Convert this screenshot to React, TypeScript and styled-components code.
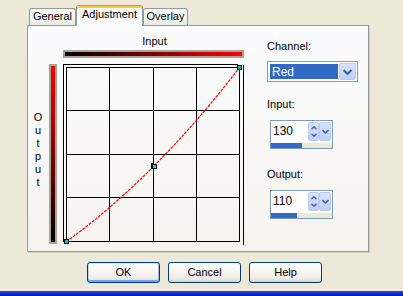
import React from 'react';
import styled, { createGlobalStyle } from 'styled-components';

const GlobalStyle = createGlobalStyle`
  html, body {
    margin: 0;
    padding: 0;
    background: #ece9d8;
  }
  body {
    font-family: 'Liberation Sans', Arial, sans-serif;
    font-size: 11px;
    color: #000;
  }
`;

const Dialog = styled.div`
  width: 403px;
  height: 296px;
  background: #ece9d8;
  display: flex;
  flex-direction: column;
  overflow: hidden;
`;

const TabStrip = styled.div`
  display: flex;
  align-items: flex-end;
  height: 26px;
  padding-left: 29px;
  margin-bottom: -1px;
  position: relative;
  z-index: 1;
`;

const Tab = styled.div<{ $active?: boolean; $w: number }>`
  box-sizing: border-box;
  width: ${(p) => p.$w}px;
  height: ${(p) => (p.$active ? 21 : 17)}px;
  margin-bottom: ${(p) => (p.$active ? 0 : 1)}px;
  border: 1px solid #919b9c;
  border-bottom: none;
  border-top: ${(p) => (p.$active ? '1px solid #e68b2c' : '1px solid #919b9c')};
  border-radius: 3px 3px 0 0;
  background: ${(p) =>
    p.$active ? '#fcfcfe' : 'linear-gradient(#ffffff, #f7f7f3 50%, #e9e8e1)'};
  box-shadow: ${(p) => (p.$active ? 'inset 0 2px 0 #ffc83c' : 'none')};
  padding-top: ${(p) => (p.$active ? 2 : 1)}px;
  text-align: center;
  line-height: 13px;
`;

const Panel = styled.div`
  box-sizing: border-box;
  margin-left: 27px;
  width: 342px;
  height: 227px;
  border: 1px solid #919b9c;
  background: linear-gradient(#fcfcfe, #f4f3ee);
  box-shadow: 1px 1px 0 #d0cdbf;
  display: flex;
`;

const OutputText = styled.div`
  width: 20px;
  margin-top: 85px;
  display: flex;
  flex-direction: column;
  align-items: center;
  line-height: 13px;
`;

const GradientBar = styled.div<{ $vertical?: boolean }>`
  box-sizing: border-box;
  border: 2px solid #a6a398;
  width: ${(p) => (p.$vertical ? '8px' : '181px')};
  height: ${(p) => (p.$vertical ? '180px' : '8px')};
  margin-top: ${(p) => (p.$vertical ? '38px' : '2px')};
  margin-left: ${(p) => (p.$vertical ? '1px' : '0')};
  background: ${(p) =>
    p.$vertical
      ? 'linear-gradient(to bottom, #ff0000, #000000)'
      : 'linear-gradient(to right, #000000, #ff0000)'};
`;

const GraphColumn = styled.div`
  width: 183px;
  margin-left: 6px;
  display: flex;
  flex-direction: column;
`;

const InputCaption = styled.div`
  margin-top: 9px;
  line-height: 13px;
  text-align: center;
`;

const Graph = styled.svg`
  display: block;
  margin-top: 4px;
`;

const Controls = styled.div`
  margin-left: 21px;
  display: flex;
  flex-direction: column;
`;

const Label = styled.div<{ $gap: number }>`
  margin-top: ${(p) => p.$gap}px;
  line-height: 13px;
`;

const Combo = styled.div`
  box-sizing: border-box;
  margin-top: 8px;
  width: 91px;
  height: 21px;
  border: 1px solid #7f9db9;
  background: #fff;
  display: flex;
  padding: 1px 1px 1px 2px;
  gap: 1px;
`;

const ComboValue = styled.div`
  flex: 1;
  margin: 1px 0;
  background: #316ac5;
  color: #fff;
  padding-left: 2px;
  font-size: 12px;
  line-height: 16px;
`;

const ArrowButton = styled.div<{ $w: number }>`
  box-sizing: border-box;
  width: ${(p) => p.$w}px;
  border: 1px solid #b9cbf3;
  border-radius: 2px;
  background: linear-gradient(#d7e3fd, #bccffa);
  display: flex;
  flex-direction: column;
  align-items: center;
  justify-content: center;
`;

const Spin = styled.div`
  box-sizing: border-box;
  margin-top: 9px;
  margin-left: 3px;
  width: 63px;
  height: 29px;
  border: 1px solid #7f9db9;
  background: #fff;
  display: flex;
  flex-direction: column;
`;

const SpinRow = styled.div`
  height: 19px;
  display: flex;
  padding: 1px 1px 0 2px;
`;

const SpinValue = styled.div`
  flex: 1;
  font-size: 12px;
  line-height: 18px;
`;

const Track = styled.div`
  margin: 2px 0 0 0;
  height: 5px;
  background: #ece9d8;
`;

const Fill = styled.div`
  height: 100%;
  background: #316ac5;
`;

const Footer = styled.div`
  display: flex;
  gap: 8px;
  margin-top: 10px;
  padding-left: 87px;
`;

const Button = styled.div<{ $default?: boolean }>`
  box-sizing: border-box;
  width: 73px;
  height: 21px;
  border: 1px solid #003c74;
  border-radius: 3px;
  background: linear-gradient(#ffffff, #f5f4f0 55%, #ebe9e1 85%, #d8d3c8);
  box-shadow: ${(p) =>
    p.$default
      ? 'inset 0 1px 0 #cee7ff, inset 0 -2px 0 #7ea0ea, inset 1px 0 0 #b8d0f7, inset -1px 0 0 #9cb7ee'
      : 'none'};
  text-align: center;
  line-height: 19px;
  font-size: 11px;
`;

const FrameEdge = styled.div`
  margin-top: auto;
  height: 5px;
  background: linear-gradient(#1d4ee0, #0a2bc2 60%, #001d9e);
`;

const Chevron: React.FC<{ up?: boolean; size?: number }> = ({ up, size = 7 }) => (
  <svg width={size} height={Math.ceil(size / 2) + 1} viewBox="0 0 7 4">
    <polyline
      points={up ? '0.5,3.5 3.5,0.5 6.5,3.5' : '0.5,0.5 3.5,3.5 6.5,0.5'}
      fill="none"
      stroke="#4d6185"
      strokeWidth="1.6"
    />
  </svg>
);

const cols = [3.5, 46.5, 90.5, 133.5, 176.5];
const rows = [5.5, 48.5, 92.5, 135.5, 179.5];

const CurveGraph: React.FC = () => (
  <Graph width={183} height={184}>
    {/* outer frame: top, left, right */}
    <line x1={0} y1={2.5} x2={175} y2={2.5} stroke="#000" />
    <line x1={0.5} y1={2} x2={0.5} y2={180} stroke="#000" />
    <line x1={180.5} y1={3} x2={180.5} y2={183} stroke="#000" />
    {cols.map((x) => (
      <line key={'c' + x} x1={x} y1={5} x2={x} y2={180} stroke="#000" />
    ))}
    {rows.map((y) => (
      <line key={'r' + y} x1={3} y1={y} x2={177} y2={y} stroke="#000" />
    ))}
    <path
      d="M3.5 179.5 Q92 115.5 176.5 5.5"
      fill="none"
      stroke="#ff0000"
      strokeWidth="1.2"
      strokeDasharray="3 1"
    />
    <rect x={1.5} y={177.5} width={4} height={4} fill="#00c8c8" stroke="#000" />
    <rect x={88} y={101} width={2} height={6} fill="#000" />
    <rect x={89.5} y={102.5} width={4} height={4} fill="#00e0e0" stroke="#000" />
    <rect x={174.5} y={3.5} width={4} height={4} fill="#00c8c8" stroke="#000" />
  </Graph>
);

const SpinField: React.FC<{ value: number }> = ({ value }) => (
  <Spin>
    <SpinRow>
      <SpinValue>{value}</SpinValue>
      <ArrowButton $w={11} style={{ gap: 3 }}>
        <Chevron up size={6} />
        <Chevron size={6} />
      </ArrowButton>
      <ArrowButton $w={12}>
        <Chevron />
      </ArrowButton>
    </SpinRow>
    <Track>
      <Fill style={{ width: `${(value / 255) * 100}%` }} />
    </Track>
  </Spin>
);

export default function App() {
  return (
    <Dialog>
      <GlobalStyle />
      <TabStrip>
        <Tab $w={47}>General</Tab>
        <Tab $w={67} $active>
          Adjustment
        </Tab>
        <Tab $w={45}>Overlay</Tab>
      </TabStrip>
      <Panel>
        <OutputText>
          {'Output'.split('').map((ch, i) => (
            <span key={i}>{ch}</span>
          ))}
        </OutputText>
        <GradientBar $vertical />
        <GraphColumn>
          <InputCaption>Input</InputCaption>
          <GradientBar />
          <CurveGraph />
        </GraphColumn>
        <Controls>
          <Label $gap={14}>Channel:</Label>
          <Combo>
            <ComboValue>Red</ComboValue>
            <ArrowButton $w={17}>
              <Chevron size={9} />
            </ArrowButton>
          </Combo>
          <Label $gap={16}>Input:</Label>
          <SpinField value={130} />
          <Label $gap={19}>Output:</Label>
          <SpinField value={110} />
        </Controls>
      </Panel>
      <Footer>
        <Button $default>OK</Button>
        <Button>Cancel</Button>
        <Button>Help</Button>
      </Footer>
      <FrameEdge />
    </Dialog>
  );
}
